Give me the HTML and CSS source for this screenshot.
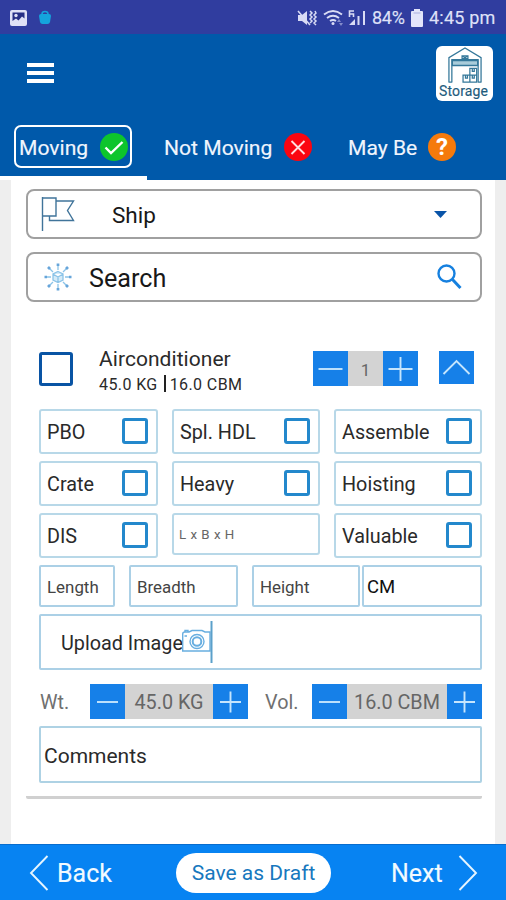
FILE: index.html
```html
<!DOCTYPE html>
<html lang="en">
<head>
<meta charset="utf-8">
<title>Moving survey</title>
<link rel="stylesheet" href="styles.css">
</head>
<body>
<div class="status">
  <svg class="s-pic" width="17" height="16" viewBox="0 0 17 16"><rect width="17" height="16" rx="2" fill="#dfe1f6"/><path d="M2.500 2.500H14.500V8.500L12 6.500L8.500 10.500L6 8.500L2.500 11Z" fill="#262f85"/><circle cx="6" cy="5.500" r="1.700" fill="#dfe1f6"/></svg>
  <svg class="s-bag" width="14" height="15" viewBox="0 0 14 15"><path d="M1 6Q1 4 3 4H11Q13 4 13 6L12 12Q11.500 14 9.500 14H4.500Q2.500 14 2 12Z" fill="#14a4dc"/><path d="M4 6V4Q4 1.500 7 1.500T10 4V6" fill="none" stroke="#14a4dc" stroke-width="1.500"/></svg>
  <svg class="s-icons" width="72" height="20" viewBox="0 0 72 20" fill="#d9dcf5"><path d="M1 7H5L10 3V17L5 13H1Z"/><path d="M1 3L13 17" stroke="#d9dcf5" stroke-width="1.500"/><path d="M13 3L15 5L13 7L15 9L13 11L15 13L13 15M18 3L19 5L17 7L19 9L17 11L19 13L17 15L19 17" fill="none" stroke="#d9dcf5" stroke-width="1.500"/><g fill="none" stroke="#d9dcf5" stroke-width="1.900"><path d="M27 6.500Q36 -.5 45 6.500M30 10Q36 5.500 42 10M33 13Q36 11 39 13"/></g><circle cx="36" cy="15.500" r="1.500"/><path d="M40 14L42 11L44 14ZM42 15H46L44 18Z" opacity=".5"/><path d="M52.500 9V3H57M53 6H56.500V9" fill="none" stroke="#d9dcf5" stroke-width="1.600"/><path d="M52 17L58 11V17ZM60.500 8H62.500V17H60.500ZM66 3H68V17H66Z"/></svg>
  <span class="pct">84%</span>
  <svg class="s-bat" width="12" height="18" viewBox="0 0 12 18"><path d="M3 0H9V2H11Q12 2 12 3V17Q12 18 11 18H1Q0 18 0 17V3Q0 2 1 2H3Z" fill="#e3e5fa"/><path d="M2.500 4H9.500" stroke="#a9aedd"/></svg>
  <span class="time">4:45 pm</span>
</div>
<header class="header">
  <div class="topbar">
    <div class="burger"><i></i><i></i><i></i></div>
    <div class="storage">
      <svg width="38" height="38" viewBox="0 0 38 38" fill="none" stroke="#35789a" stroke-width="1.300"><path d="M2.500 36V11L19 1L35.500 11V36M5.500 36V13H32.500V36M2 36H6M32 36H36"/><path d="M6 14H32V19H6Z" fill="#a9ccda"/><path d="M16 9H22V12H16ZM16 9L19 11L22 9"/><path d="M24 22H31V29H24ZM17 29H24V36H17ZM24 29H31V36H24ZM26.500 22V25H28.500V22M19.500 29V32H21.500V29M26.500 29V32H28.500V29"/></svg>
      <span>Storage</span>
    </div>
  </div>
  <nav class="tabs">
    <div class="tab active"><span>Moving</span><svg width="28" height="28" viewBox="0 0 28 28"><circle cx="14" cy="14" r="14" fill="#0dc52c"/><path d="M5.500 14.500L11 20L22.500 9" fill="none" stroke="#fff" stroke-width="2.400"/></svg></div>
    <div class="tab no"><span>Not Moving</span><svg width="28" height="28" viewBox="0 0 28 28"><circle cx="14" cy="14" r="14" fill="#fb0510"/><path d="M7.500 8L20.500 21M20.500 8L7.500 21" stroke="#fdd" stroke-width="1.900"/></svg></div>
    <div class="tab maybe"><span>May Be</span><b>?</b></div>
  </nav>
</header>
<main class="page">
  <div class="box select">
    <svg width="34" height="36" viewBox="0 0 34 36" fill="none" stroke="#40749a" stroke-width="1.400"><path d="M1.500 35V1M1.500 2H15V20H1.500M15 5H32.500L26.500 14.500L32.500 24.500H8.500V20.500"/></svg>
    <span>Ship</span>
    <svg class="drop" width="13" height="7" viewBox="0 0 13 7"><path d="M0 0H13L6.500 7Z" fill="#0954a8"/></svg>
  </div>
  <div class="box search">
    <svg width="28" height="28" viewBox="0 0 28 28" fill="none" stroke="#8cc4e8" stroke-width="1.300"><path d="M14 8.500L19 11V17L14 19.500L9 17V11ZM9 11L14 14L19 11M14 14V19.500" fill="#d5ebf8"/><path d="M14 1V7M14 21V27M1 14H7M21 14H27M5 5L9 9M19 19L23 23M23 5L19 9M9 19L5 23"/><path d="M14 .5V3M14 25V27.500M.5 14H3M25 14H27.500M4 4L6 6M22 22L24 24M24 4L22 6M6 22L4 24" stroke="#66a5da" stroke-width="2.700"/></svg>
    <span>Search</span>
    <svg class="mag" width="25" height="26" viewBox="0 0 25 26" fill="none" stroke="#1680df"><circle cx="9.500" cy="9.500" r="8" stroke-width="2.400"/><path d="M15.500 15.500L23.500 24" stroke-width="3"/></svg>
  </div>
  <section class="card">
    <div class="item">
      <i class="check big"></i>
      <div class="info"><div class="name">Airconditioner</div><div class="meta"><span>45.0 KG</span><i></i><span>16.0 CBM</span></div></div>
      <div class="stepper qty"><svg class="btn" viewBox="0 0 35 35"><path d="M5.500 18H29.500"/></svg><span>1</span><svg class="btn" viewBox="0 0 35 35"><path d="M5.500 18H29.500M17.500 6V30"/></svg></div>
      <svg class="collapse" width="35" height="33" viewBox="0 0 35 33"><path d="M4.500 23L17.500 10L30.500 23"/></svg>
    </div>
    <div class="grid">
      <label><span>PBO</span><i class="check"></i></label>
      <label><span>Spl. HDL</span><i class="check"></i></label>
      <label><span>Assemble</span><i class="check"></i></label>
      <label><span>Crate</span><i class="check"></i></label>
      <label><span>Heavy</span><i class="check"></i></label>
      <label><span>Hoisting</span><i class="check"></i></label>
      <label><span>DIS</span><i class="check"></i></label>
      <label class="lbh"><span>L x B x H</span></label>
      <label><span>Valuable</span><i class="check"></i></label>
    </div>
    <div class="dims">
      <div><span>Length</span></div><div><span>Breadth</span></div><div><span>Height</span></div><div class="unit"><span>CM</span></div>
    </div>
    <div class="upload">
      <span>Upload Image</span>
      <svg width="31" height="44" viewBox="0 0 31 44" fill="none" stroke="#68aee0" stroke-width="1.400"><path d="M.7 14Q.7 12 3 12H7L10 10.500H20L23 12H28V31H.7Z"/><path d="M3 12V10.500H6V12M2.500 16H5"/><circle cx="15" cy="21.500" r="7"/><circle cx="15" cy="21.500" r="4.300" stroke-width="2"/><path d="M29.500 1V43" stroke="#5ba0ca" stroke-width="2"/></svg>
    </div>
    <div class="measure">
      <span class="wt">Wt.</span>
      <div class="stepper m1"><svg class="btn" viewBox="0 0 35 35"><path d="M7 18H28"/></svg><span>45.0 KG</span><svg class="btn" viewBox="0 0 35 35"><path d="M7 18H28M17.500 7.500V28.500"/></svg></div>
      <span class="vol">Vol.</span>
      <div class="stepper m2"><svg class="btn" viewBox="0 0 35 35"><path d="M7 18H28"/></svg><span>16.0 CBM</span><svg class="btn" viewBox="0 0 35 35"><path d="M7 18H28M17.500 7.500V28.500"/></svg></div>
    </div>
    <div class="comments"><span>Comments</span></div>
  </section>
</main>
<footer class="footer">
  <svg width="20" height="36" viewBox="0 0 20 36"><path d="M18.500 1L2 18L18.500 35"/></svg>
  <span class="back">Back</span>
  <span class="draft">Save as Draft</span>
  <span class="next">Next</span>
  <svg width="20" height="36" viewBox="0 0 20 36"><path d="M1.500 1L18 18L1.500 35"/></svg>
</footer>
</body>
</html>
```
FILE: styles.css
```css
* { box-sizing: border-box; }
body { margin: 0; width: 506px; height: 900px; overflow: hidden; display: flex; flex-direction: column; background: #fff; font-family: Roboto, "Liberation Sans", sans-serif; color: #2a2a2a; }
span { white-space: nowrap; }
svg { display: block; flex: none; }
.status { height: 34px; flex: none; background: #303d9f; display: flex; align-items: center; padding: 1px 0 0 10px; color: #dfe1f8; font-size: 18px; }
.s-bag { margin-left: 11px; }
.s-icons { margin-left: 245px; }
.pct { width: 33px; margin-left: 3px; letter-spacing: -.3px; -webkit-text-stroke: .15px #dfe1f8; }
.s-bat { margin-left: 6px; }
.time { margin-left: 6px; letter-spacing: .2px; -webkit-text-stroke: .15px #dfe1f8; }
.header { height: 146px; flex: none; background: #0059aa; display: flex; flex-direction: column; }
.header::after { content: ""; width: 147px; height: 4px; flex: none; margin-top: -4px; background: #fff; }
.topbar { height: 81px; display: flex; justify-content: space-between; padding: 12px 13px 0 27px; }
.burger { display: flex; flex-direction: column; gap: 4px; padding-top: 17px; }
.burger i { width: 27px; height: 4px; background: #fff; }
.storage { width: 57px; height: 55px; border-radius: 6px; background: #fff; display: flex; flex-direction: column; align-items: center; color: #1e5b7d; font-size: 14px; line-height: 15px; letter-spacing: .1px; -webkit-text-stroke: .15px #1e5b7d; }
.storage svg { height: 37px; margin-top: 1px; }
.storage span { margin-right: 2px; }
.tabs { display: flex; height: 65px; color: #f0f5fd; font-size: 21.100px; }
.tab { display: flex; align-items: center; justify-content: space-between; height: 43px; margin-top: 10px; }
.tab span { margin-top: 2px; -webkit-text-stroke: .15px #f0f5fd; }
.active { width: 118px; margin-left: 14px; padding: 0 2px 0 3px; border: 2px solid #fff; border-radius: 7px; }
.no { width: 148px; margin-left: 32px; }
.maybe { width: 108px; margin-left: 36px; }
.maybe b { width: 28px; height: 28px; border-radius: 50%; background: #f57a0c; color: #fff; font-size: 24px; line-height: 28px; text-align: center; }
.page { height: 664px; flex: none; border: solid #eee; border-width: 0 11px; padding: 9px 13px 0 15px; background: #fff; }
.box { height: 50px; border: 2px solid #a0a0a0; border-radius: 8px; display: flex; align-items: center; font-size: 22.500px; color: #181818; }
.box span { margin-top: 2px; }
.select { padding: 0 33px 0 13px; }
.select span { margin-left: 37px; }
.drop { margin-left: auto; }
.search { margin-top: 13px; padding: 0 18px 0 16px; font-size: 25.200px; }
.search span { margin-left: 17px; }
.mag { margin-left: auto; }
.card { margin-top: 37px; height: 460px; padding: 12px 0 0 13px; border-bottom: 3px solid #d0d0d0; border-radius: 2px; }
.item { height: 35px; display: flex; align-items: flex-start; }
.check { flex: none; width: 26px; height: 26px; border: 3px solid #2388cc; border-radius: 3px; }
.big { width: 34px; height: 34px; border-color: #0954a4; margin-top: 1px; }
.info { width: 214px; margin-left: 26px; margin-top: -5px; }
.name { font-size: 21px; line-height: 26px; letter-spacing: .05px; }
.meta { display: flex; align-items: center; font-size: 16px; line-height: 26px; letter-spacing: .4px; }
.meta i { width: 2px; height: 17px; background: #222; margin: -4px 4px 0 6px; }
.stepper { display: flex; height: 35px; background: #d3d3d3; color: #666; }
.stepper span { flex: 1; text-align: center; line-height: 38px; }
.btn { width: 35px; height: 35px; background: #1680e8; }
.btn path, .collapse path { fill: none; stroke: #c5e5fd; stroke-width: 1.900; }
.qty { width: 105px; font-size: 17px; }
.collapse { margin-left: 21px; background: #1680e8; }
.grid { margin-top: 23px; display: grid; grid-template-columns: 119px 148px 148px; column-gap: 14px; row-gap: 7px; }
.grid label { height: 45px; border: 2px solid #b8d8e8; border-radius: 3px; display: flex; align-items: center; justify-content: space-between; padding: 0 8px 0 6px; font-size: 19.800px; }
.grid label span { margin-top: 1px; }
.grid .check { margin-top: -1px; }
.grid .lbh { height: 42px; font-size: 13.300px; letter-spacing: .5px; color: #666; padding-left: 5px; }
.dims { margin-top: 7px; display: grid; grid-template-columns: 76px 109px 108px 120px; column-gap: 14px; }
.dims div { height: 42px; border: 2px solid #abd0e6; border-radius: 2px; padding-left: 6px; display: flex; align-items: center; font-size: 16.900px; color: #444; }
.dims span { margin-top: 1px; }
.dims .unit { margin-left: -12px; width: 120px; padding-left: 3px; font-size: 18.500px; color: #111; }
.upload { margin-top: 7px; height: 56px; border: 2px solid #abd0e6; border-radius: 2px; padding-left: 20px; display: flex; align-items: center; font-size: 19.800px; }
.upload span { margin-top: 2px; margin-right: -1px; }
.comments span { margin-top: 2px; }
.measure { margin-top: 14px; height: 35px; display: flex; font-size: 19.800px; color: #707070; line-height: 38px; }
.wt { width: 51px; padding-left: 1px; }
.m1 { width: 158px; }
.vol { width: 64px; padding-left: 17px; }
.m2 { width: 170px; }
.comments { margin-top: 7px; height: 57px; border: 2px solid #aed2e4; border-radius: 2px; padding-left: 3px; display: flex; align-items: center; font-size: 21px; }
.footer { height: 56px; flex: none; background: #0783f2; border-top: 1px solid #086dce; display: flex; align-items: center; color: #f2faff; padding: 1px 0 0 29px; font-size: 25px; }
.footer path { fill: none; stroke: #e6f5ff; stroke-width: 1.900; }
.back, .next { -webkit-text-stroke: .15px #f2faff; }
.back { width: 119px; padding-left: 8px; }
.draft { margin-left: 8px; width: 155px; height: 40px; border-radius: 20px; background: #fff; color: #1778be; font-size: 21px; line-height: 41px; text-align: center; }
.next { width: 67px; margin-left: 60px; }
```
